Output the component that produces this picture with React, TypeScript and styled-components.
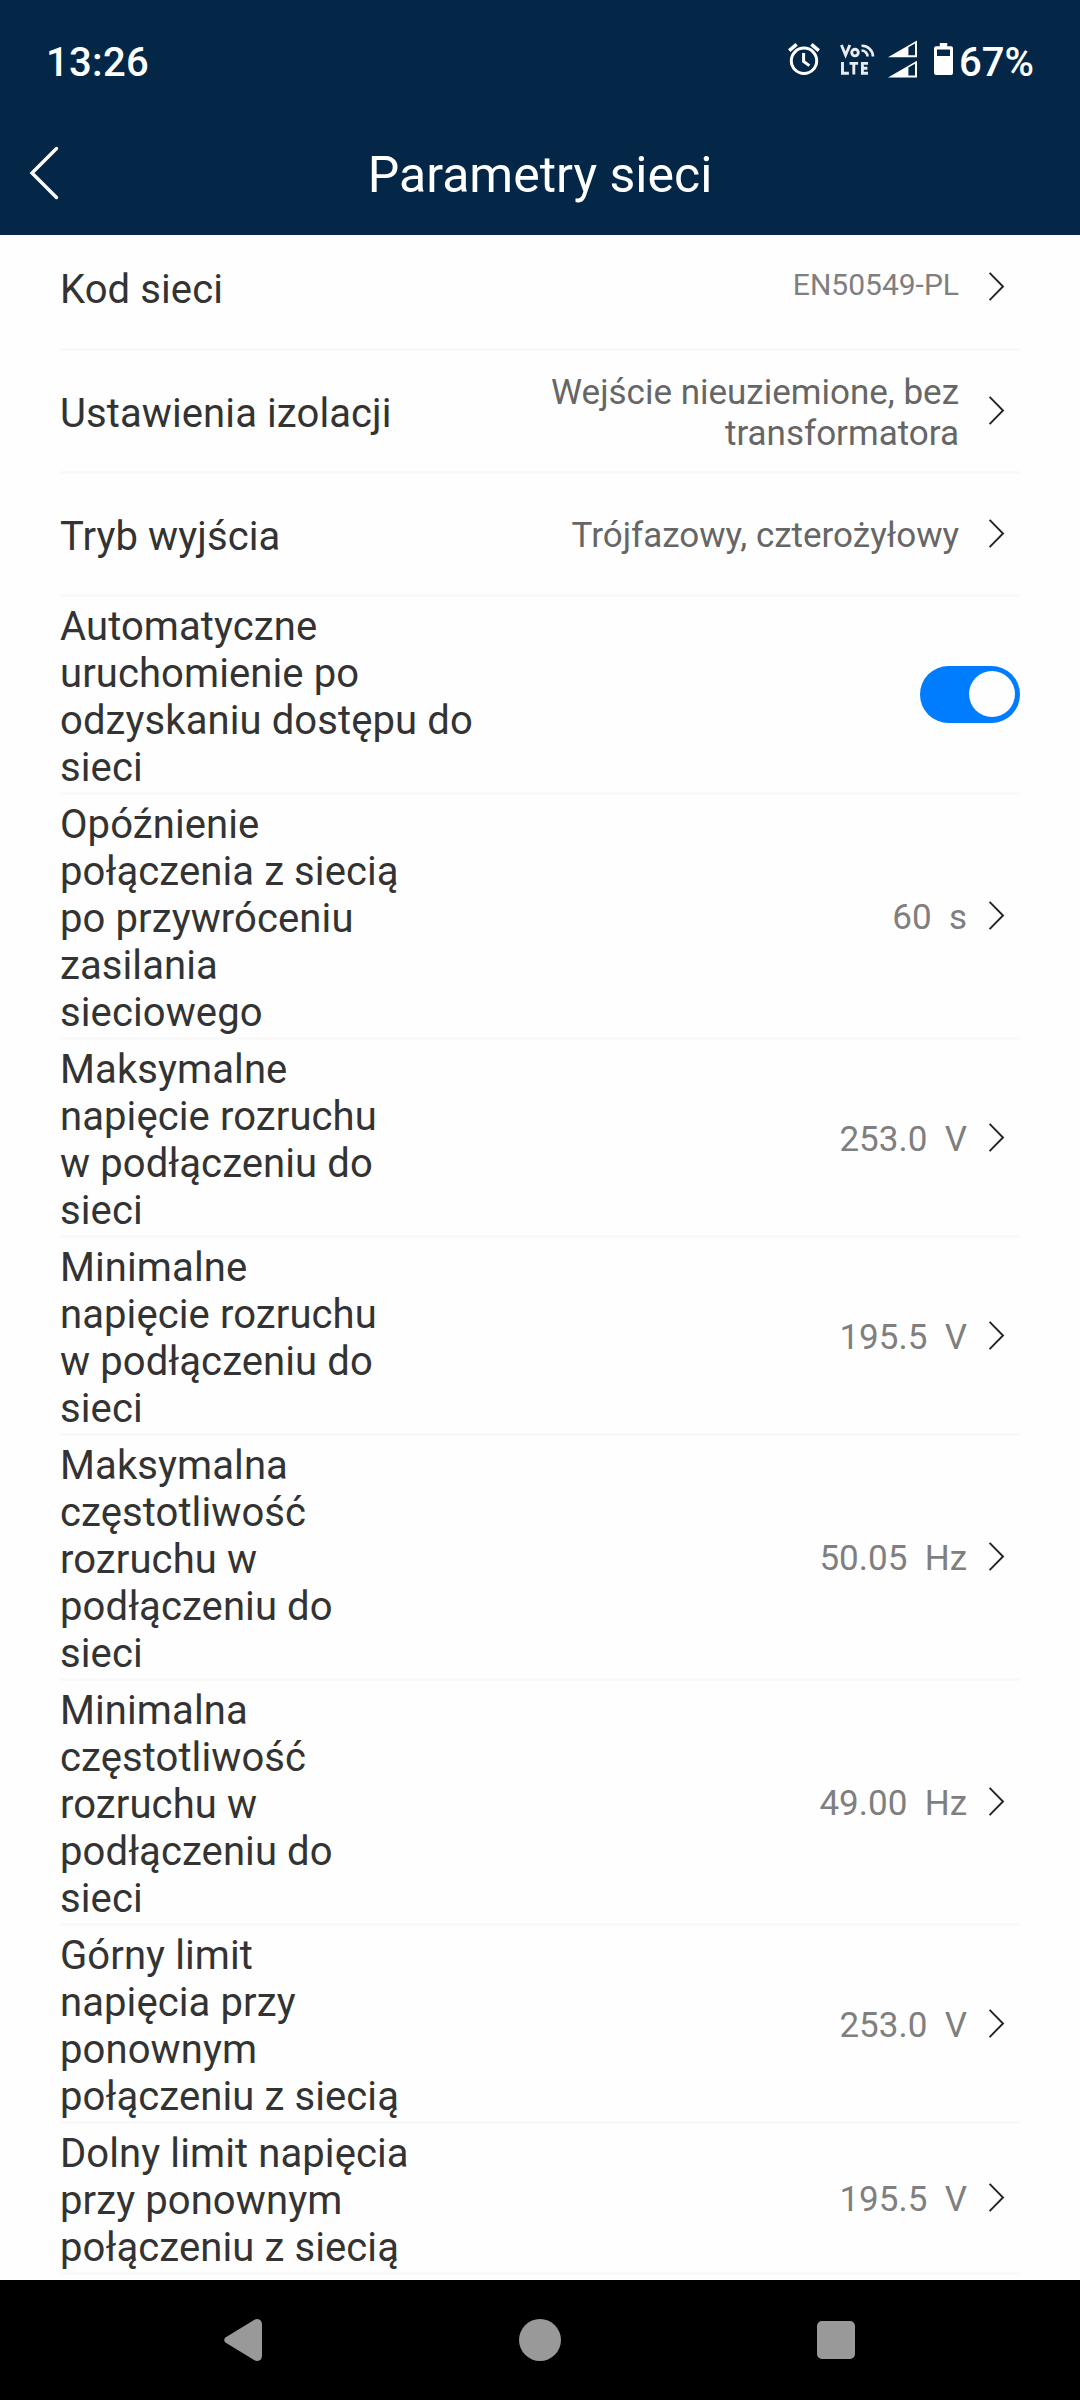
import React from 'react';
import styled, { createGlobalStyle } from 'styled-components';

const Global = createGlobalStyle`
  * { box-sizing: border-box; }
  body { margin: 0; background: #fefefe; font-family: Roboto, "Noto Sans", sans-serif; }
  svg { display: block; flex: none; }
`;

const Screen = styled.div`
  width: 1080px;
  height: 2400px;
  display: flex;
  flex-direction: column;
  overflow: hidden;
  background: #fefefe;
`;

const Top = styled.header`
  flex: none;
  height: 235px;
  background: #042748;
  color: #fff;
`;

const StatusBar = styled.div`
  height: 120px;
  display: flex;
  align-items: center;
  justify-content: space-between;
  padding: 4px 46px 0;
  font-size: 40px;
  font-weight: 500;
`;

const Clock = styled.span`
  letter-spacing: 0.3px;
`;

const StatusIcons = styled.div`
  display: flex;
  align-items: center;
`;

const IconSlot = styled.span<{ $gap: number }>`
  margin-right: ${p => p.$gap}px;
  padding-bottom: 6px;
`;

const TitleBar = styled.div`
  height: 115px;
  display: grid;
  grid-template-columns: 90px 1fr 90px;
  align-items: center;
  padding-bottom: 5px;
`;

const BackButton = styled.button`
  border: 0;
  padding: 0 0 4px 28px;
  background: none;
  color: inherit;
`;

const Title = styled.h1`
  margin: 0;
  font-size: 50px;
  font-weight: 400;
  text-align: center;
`;

const List = styled.main`
  flex: 1;
  min-height: 0;
  overflow: hidden;
  padding: 0 60px;
`;

const Scrolled = styled.div`
  margin-top: -8px;
`;

const Row = styled.div`
  min-height: 123px;
  display: flex;
  align-items: center;
  justify-content: space-between;
  border-bottom: 3px solid #f9f9f9;

  &:first-child {
    min-height: 124px;
    padding-bottom: 1px;
  }
`;

const Label = styled.div`
  padding: 6px 0 1px;
  font-size: 40px;
  line-height: 47px;
  letter-spacing: 0.1px;
  color: #333;
  white-space: pre-line;
`;

const Right = styled.div`
  display: flex;
  align-items: center;
  padding-right: 15px;
`;

const Value = styled.div<{ $kind: Kind }>`
  margin-right: ${p => (p.$kind === 'number' ? 21 : 29)}px;
  padding: ${p => (p.$kind === 'code' ? '0 0 6px' : '3px 0 0')};
  font-size: ${p => (p.$kind === 'code' ? 30 : 35)}px;
  line-height: 41px;
  color: ${p => (p.$kind === 'text' ? '#666' : '#7f7f7f')};
  text-align: right;
  white-space: pre;
`;

const Switch = styled.div`
  width: 100px;
  height: 57px;
  border-radius: 29px;
  background: #007dff;
  display: flex;
  align-items: center;
  justify-content: flex-end;
  padding: 0 5px 1px 0;
`;

const Knob = styled.div`
  width: 46px;
  height: 46px;
  border-radius: 50%;
  background: #fefefe;
`;

const Nav = styled.nav`
  flex: none;
  height: 120px;
  display: flex;
  align-items: center;
  justify-content: space-between;
  padding: 0 225px 0 224px;
  background: #000;
  color: #999;
`;

type Kind = 'code' | 'text' | 'number' | 'switch';
type Item = { label: string; value?: string; kind: Kind };

const items: Item[] = [
  { label: 'Kod sieci', value: 'EN50549-PL', kind: 'code' },
  { label: 'Ustawienia izolacji', value: 'Wejście nieuziemione, bez\ntransformatora', kind: 'text' },
  { label: 'Tryb wyjścia', value: 'Trójfazowy, czterożyłowy', kind: 'text' },
  { label: 'Automatyczne\nuruchomienie po\nodzyskaniu dostępu do\nsieci', kind: 'switch' },
  { label: 'Opóźnienie\npołączenia z siecią\npo przywróceniu\nzasilania\nsieciowego', value: '60  s', kind: 'number' },
  { label: 'Maksymalne\nnapięcie rozruchu\nw podłączeniu do\nsieci', value: '253.0  V', kind: 'number' },
  { label: 'Minimalne\nnapięcie rozruchu\nw podłączeniu do\nsieci', value: '195.5  V', kind: 'number' },
  { label: 'Maksymalna\nczęstotliwość\nrozruchu w\npodłączeniu do\nsieci', value: '50.05  Hz', kind: 'number' },
  { label: 'Minimalna\nczęstotliwość\nrozruchu w\npodłączeniu do\nsieci', value: '49.00  Hz', kind: 'number' },
  { label: 'Górny limit\nnapięcia przy\nponownym\npołączeniu z siecią', value: '253.0  V', kind: 'number' },
  { label: 'Dolny limit napięcia\nprzy ponownym\npołączeniu z siecią', value: '195.5  V', kind: 'number' },
];

const Chevron = () => (
  <svg width="17" height="30" viewBox="0 0 17 30" fill="none" stroke="#222" strokeWidth="1.9">
    <path d="M1.6 .9 15 14.5 1.6 28.1" />
  </svg>
);

const Alarm = () => (
  <svg width="32" height="32" viewBox="0 0 32 32" fill="none" stroke="#fff" strokeWidth="3">
    <circle cx="16" cy="17.8" r="12.7" />
    <path d="M1.2 7.6 8.6 1.4M30.8 7.6 23.4 1.4" strokeWidth="3.6" />
    <path d="M15.6 10v8.4l5.8 4.2" strokeWidth="3" />
  </svg>
);

const VoLte = () => (
  <svg width="36" height="32" viewBox="0 0 36 32" fill="none" stroke="#e8ecf0" strokeWidth="2.9">
    <path d="M1.4 2 5.6 12 9.800 2" />
    <circle cx="15" cy="9.600" r="3.300" />
    <path d="M21.500 7.500a6 6 0 0 1 6 6M21.500 2.800A11 11 0 0 1 33 13.500" strokeWidth="2.600" />
    <path d="M2.500 19v11.200h6.400M9.500 20.400h8.600M13.800 20.400v11.200M28 20.400h-5.600v9.800H28M22.400 25.300h5" />
  </svg>
);

const Signal = () => (
  <svg width="30" height="38" viewBox="0 0 30 38" fill="#fff" fillRule="evenodd">
    <path d="M0 17.200 29 .6v16.600ZM20.400 7.300v8h6.600V3.600Z" />
    <path d="M0 37.400 29 20.800v16.600ZM20.400 27.500v8h6.600V23.800Z" />
  </svg>
);

const Battery = () => (
  <svg width="19" height="32" viewBox="0 0 19 32" fill="#fff" fillRule="evenodd">
    <path d="M5.8 0h7.4v3.2H17a2 2 0 0 1 2 2V30a2 2 0 0 1-2 2H2a2 2 0 0 1-2-2V5.200a2 2 0 0 1 2-2h3.800ZM3 6.600v6.400h13V6.600Z" />
  </svg>
);

export default function App() {
  return (
    <Screen>
      <Global />
      <Top>
        <StatusBar>
          <Clock>13:26</Clock>
          <StatusIcons>
            <IconSlot $gap={20}><Alarm /></IconSlot>
            <IconSlot $gap={12}><VoLte /></IconSlot>
            <IconSlot $gap={16}><Signal /></IconSlot>
            <IconSlot $gap={6}><Battery /></IconSlot>
            <span>67%</span>
          </StatusIcons>
        </StatusBar>
        <TitleBar>
          <BackButton aria-label="Wstecz">
            <svg width="32" height="54" viewBox="0 0 32 54" fill="none" stroke="#fff" strokeWidth="3.4" strokeLinecap="round">
              <path d="M28.500 2.500 4 27 28.500 51.500" />
            </svg>
          </BackButton>
          <Title>Parametry sieci</Title>
        </TitleBar>
      </Top>
      <List>
        <Scrolled>
          {items.map(item => (
            <Row key={item.label}>
              <Label>{item.label}</Label>
              {item.kind === 'switch' ? (
                <Switch><Knob /></Switch>
              ) : (
                <Right>
                  <Value $kind={item.kind}>{item.value}</Value>
                  <Chevron />
                </Right>
              )}
            </Row>
          ))}
        </Scrolled>
      </List>
      <Nav>
        <svg width="38" height="42" viewBox="0 0 38 42" fill="currentColor">
          <path d="M1.800 18.200 30.500.8Q33-.6 35.800.800 38 2 38 5v32q0 3-2.200 4.200-2.800 1.400-5.300 0L1.800 23.800Q-1.500 21 1.800 18.200Z" />
        </svg>
        <svg width="42" height="42" viewBox="0 0 42 42" fill="currentColor">
          <circle cx="21" cy="21" r="21" />
        </svg>
        <svg width="38" height="38" viewBox="0 0 38 38" fill="currentColor">
          <rect width="38" height="38" rx="5" />
        </svg>
      </Nav>
    </Screen>
  );
}
